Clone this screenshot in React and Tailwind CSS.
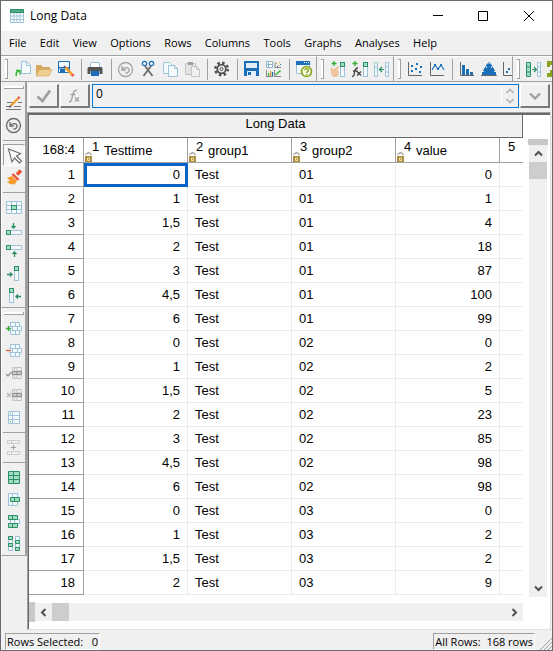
import React from 'react';

const BLUE = '#1a6fb8';
const GREEN = '#2a8f68';
const MINT = '#a3dcc0';
const SKY = '#9cc3d9';
const GRAY = '#a3a3a3';

function Glyph({ children }) {
  return (
    <svg viewBox="0 0 22 22" width="22" height="22" fill="none" aria-hidden="true" className="shrink-0">
      {children}
    </svg>
  );
}

/* One spreadsheet column with a shaded top cell. */
function ColumnShape({ x }) {
  return (
    <>
      <rect x={x} y="4.500" width="4" height="14" stroke={SKY} fill="#f4f9fc" />
      <rect x={x} y="4.500" width="4" height="4" stroke={GREEN} fill={MINT} />
    </>
  );
}

function Bricks({ color }) {
  return (
    <path
      d="M7.500 4.500h9v4h-9zM12.500 4.500v4M7.500 12.500h9v4h-9zM12.500 12.500v4M9.500 8.500h9v4h-9zM14.500 8.500v4M6 8.500h4M6 12.500h4"
      stroke={color}
      fill="#f4f9fc"
    />
  );
}

function GreyTable() {
  return (
    <>
      <path d="M9.500 5.500h9v11h-9zM14 5.500v11M9.500 9h9M9.500 13h9" stroke="#c4c4c4" fill="#eee" />
      <path d="M9.500 9.500h9v3h-9zM14 9.500v3" stroke="#8f8f8f" fill="#ccc" />
      <path d="M11 7h1M11 15h1" stroke="#999" />
    </>
  );
}

const icons = {
  newFile: (
    <>
      <path d="M10.500 3.500h5.500l3.500 3.500v8.500h-9z" fill="#f5fafd" stroke={SKY} />
      <path d="M15.500 3.500v4h4" stroke={SKY} />
      <path d="M5.500 18c-1-2.500 0-4.500 2.500-5" stroke="#33b733" strokeWidth="1.600" />
      <path d="M5 12.500h4v4" stroke="#33b733" strokeWidth="1.500" />
    </>
  ),
  open: (
    <>
      <path d="M3 7h5l2 2h7v3H7l-4 6z" fill="#d6aa60" />
      <path d="M6.500 11.500H19L16 18H3z" fill="#efcf91" stroke="#d6aa60" strokeWidth=".7" />
    </>
  ),
  saveAs: (
    <>
      <path d="M3.500 3.500h11v11h-11z" fill="#f3f8fc" stroke={BLUE} />
      <path d="M3 9h12v1.500H3zM5 11h5v4H5z" fill={BLUE} />
      <path d="M10.500 9.500l6.500 7" stroke="#efa02f" strokeWidth="2.800" />
      <path d="M9 8l1.500 1.500" stroke="#555" strokeWidth="1.500" />
      <path d="M17 16.500l1.500 1.500" stroke="#e75a55" strokeWidth="3" />
    </>
  ),
  print: (
    <>
      <path d="M5.500 9V5l1-.5H14l.5.5v4" fill="#fff" stroke={SKY} />
      <path d="M3.500 9h13l1 1v6h-3v-3h-9v3h-3v-6z" fill="#555" />
      <rect x="6" y="13" width="8" height="5" fill={BLUE} />
    </>
  ),
  undoGrey: (
    <>
      <circle cx="10.500" cy="11.500" r="7" stroke={GRAY} strokeWidth="1.300" />
      <path d="M7 8v4h4M7 12c2-3.500 7-3 7 0 0 2-1.500 3-3.500 3" stroke={GRAY} strokeWidth="1.300" />
    </>
  ),
  undo: (
    <>
      <circle cx="10.500" cy="11.500" r="7" stroke="#6b6b6b" strokeWidth="1.400" />
      <path d="M7 8v4h4M7 12c2-3.500 7-3 7 0 0 2-1.500 3-3.500 3" stroke="#6b6b6b" strokeWidth="1.300" />
    </>
  ),
  cut: (
    <>
      <path d="M8 8l7.500 10M14 8L6.500 18" stroke="#707070" strokeWidth="1.900" />
      <circle cx="7.500" cy="5.500" r="2.200" stroke={BLUE} strokeWidth="1.200" />
      <circle cx="14.500" cy="5.500" r="2.200" stroke={BLUE} strokeWidth="1.200" />
    </>
  ),
  copy: (
    <>
      <path d="M4.500 4.500h6l3 3v8h-9z" fill="#f5fafd" stroke={SKY} />
      <path d="M9.500 7.500h6l3 3v8h-9z" fill="#f5fafd" stroke={SKY} />
      <path d="M15.500 7.500v3h3" stroke={SKY} />
    </>
  ),
  paste: (
    <>
      <path d="M4.500 5.500h10v11h-10z" fill="#e2e2e2" stroke="#c4c4c4" />
      <path d="M7 4h5v3H7z" fill="#9d9d9d" />
      <path d="M10.500 8.500h5l3 3v7h-8z" fill="#f0f0f0" stroke="#c4c4c4" />
      <path d="M15.500 8.500v3h3" stroke="#c4c4c4" />
    </>
  ),
  gear: (
    <>
      <circle cx="10.500" cy="11" r="6.200" stroke="#505050" strokeWidth="2.600" strokeDasharray="2.430 2.430" />
      <circle cx="10.500" cy="11" r="4.300" stroke="#505050" strokeWidth="1.700" />
      <circle cx="10.500" cy="11" r="1.500" stroke="#505050" strokeWidth="1" />
    </>
  ),
  save: (
    <>
      <path d="M3 3h15v15H3z" fill={BLUE} />
      <path d="M5 5h11v5H5zM6 13h9v5H6z" fill="#e3eef8" />
      <path d="M7 14h3v3H7z" fill={BLUE} />
    </>
  ),
  reports: (
    <>
      <path d="M3.500 3.500h6v6h-6zM5.500 3.500v6M3.500 6.500h6" stroke="#8fb8cf" fill="#fff" />
      <path d="M12 4v6M12 9.500h6M11.500 12v6M11 18.500h7" stroke="#888" />
      <path d="M13 5h1v1h-1zM16 4h1v1h-1zM15 7h1v1h-1z" fill="#e49a1c" />
      <path d="M17 6h1v1h-1zM14 8h1v1h-1z" fill={BLUE} />
      <path d="M3.500 12v6M3 18.500h7" stroke="#888" />
      <path d="M5.500 18v-3" stroke="#33b733" strokeWidth="1.300" />
      <path d="M7.500 18v-5" stroke="#e49a1c" strokeWidth="1.300" />
      <path d="M9.500 18v-4" stroke={BLUE} strokeWidth="1.300" />
      <path d="M12.500 17l5-4.500" stroke="#33b733" strokeWidth="1.500" />
    </>
  ),
  help: (
    <>
      <path d="M3.500 3.500h13v12h-13z" fill="#f3f8fc" stroke={SKY} />
      <path d="M3 3h14v4H3z" fill={BLUE} />
      <path d="M11 4.500h1M13 4.500h1M15 4.500h1" stroke="#fff" />
      <circle cx="13.500" cy="13.500" r="5" fill="#f7fae6" stroke="#82a414" strokeWidth="1.600" />
      <path d="M11.800 12.300c0-2.300 3.600-2.300 3.600 0 0 1.300-1.800 1.300-1.800 2.700M13.600 16v1.200" stroke="#82a414" strokeWidth="1.400" />
    </>
  ),
  hand: (
    <>
      <path d="M4.500 5.500h5M7 3v5" stroke="#2fae2f" strokeWidth="1.300" />
      <path d="M3.500 10l1.500-.5 1.500 2L11 8l1.200 1-2.200 3 2 1.500-1 4-1.500 1.500H6L4 15.500z" fill="#edc3a0" />
      <ColumnShape x="13.500" />
    </>
  ),
  func: (
    <>
      <path d="M3.500 5.500h5M6 3v5" stroke="#2fae2f" strokeWidth="1.300" />
      <path d="M3 18.500c2 0 2-1 2.500-4s1-4.500 3.500-4.500M4 13h4.500" stroke="#444" strokeWidth="1.300" />
      <path d="M8 13.500l4 4M12 13.500l-4 4" stroke="#444" strokeWidth="1.400" />
      <ColumnShape x="14.500" />
    </>
  ),
  columnLeft: (
    <>
      <path d="M3.500 4.500h3v14h-3zM3.500 9h3M14.500 4.500h3v14h-3zM14.500 9h3M14.500 14h3" stroke={SKY} fill="#f4f9fc" />
      <path d="M13 11.500H8.500M11 9l-2.500 2.500L11 14" stroke={GREEN} strokeWidth="1.200" />
    </>
  ),
  scatter: (
    <>
      <path d="M4.500 4v13.500H18" stroke="#666" />
      <path d="M7 7h2v2H7zM12 5h2v2h-2zM16 8h2v2h-2zM7 12h2v2H7zM11 10h2v2h-2zM15 13h2v2h-2z" fill={BLUE} />
    </>
  ),
  line: (
    <>
      <path d="M4.500 4v13.500H18" stroke="#666" />
      <path d="M6 12l3-5 3 4 3-4 3 5" stroke={BLUE} strokeWidth="1.200" />
      <path d="M8 6h2v2H8zM11 10h2v2h-2zM14 6h2v2h-2z" fill={BLUE} />
    </>
  ),
  bars: (
    <>
      <path d="M4.500 4v13.500H18" stroke="#666" />
      <path d="M6 7h3v10H6zM10 11h3v6h-3zM14 14h3v3h-3z" fill={BLUE} />
    </>
  ),
  histogram: (
    <>
      <path d="M3 17.500h16" stroke="#666" />
      <path d="M4 14h3v3H4zM6 10h3v7H6zM9 6h4v11H9zM13 10h3v7h-3zM15 14h3v3h-3z" fill={BLUE} />
      <path d="M5 13c3-2 3-7 6-8.500 3 1.500 3 6.500 6 8.500" stroke={BLUE} />
    </>
  ),
  moreChart: (
    <>
      <path d="M3.500 4v13.500H18" stroke="#666" />
      <path d="M6 13h2v2H6zM8 10h2v2H8z" fill={BLUE} />
    </>
  ),
  columnRight: (
    <>
      <path d="M3.500 4.500h4v14h-4z" stroke={GREEN} fill={MINT} />
      <path d="M3.500 9h4M3.500 14h4" stroke={GREEN} />
      <path d="M14.500 4.500h3v14h-3zM14.500 9h3M14.500 14h3" stroke={SKY} fill="#f4f9fc" />
      <path d="M9 11.500h4.500M11 9l2.500 2.500L11 14" stroke={GREEN} strokeWidth="1.200" />
    </>
  ),
  stack: <path d="M2 3h6v4H5v2H2zM2 19v-4h3v-3h3v7z" fill="#86a51b" />,
  editText: (
    <>
      <path d="M4 10.500h6M15 10.500h4M3 14.500h4M11 14.500h7M3 17.500h15" stroke="#777" />
      <path d="M8 13.500l7-7" stroke="#efa02f" strokeWidth="2.400" />
      <path d="M15 6.500l1.600-1.600" stroke="#e75a55" strokeWidth="2.400" />
      <path d="M6.500 15.500L8 13.500" stroke="#555" strokeWidth="1.500" />
    </>
  ),
  pointer: <path d="M5.500 5l12 4.500-4 2.500 5 5-2 2-5-5-2.500 4z" fill="#fff" stroke="#666" strokeWidth="1.100" />,
  brush: (
    <>
      <path d="M18 4.500l-4 4" stroke="#e8502f" strokeWidth="3.400" />
      <path d="M8.500 10l5.500 5-2.500 3.500-4.500-.5-3-2.500 3-.5z" fill="#f39a2a" />
      <path d="M4 12l5-2 4.500 5-4 2z" fill="#f39a2a" />
      <path d="M9.500 8l6 6" stroke="#e8502f" strokeWidth="2.400" />
    </>
  ),
  cells: (
    <>
      <path d="M3.500 5.500h15v12h-15zM8.500 5.500v12M13.500 5.500v12M3.500 9.500h15M3.500 13.500h15" stroke={SKY} fill="#f8fbfd" />
      <path d="M8.500 9.500h5v4h-5z" stroke={GREEN} fill={MINT} />
    </>
  ),
  rowBelow: (
    <>
      <path d="M3.500 12.500h15v4h-15z" stroke={SKY} fill="#f4f9fc" />
      <path d="M3.500 12.500h4v4h-4z" stroke={GREEN} fill={MINT} />
      <path d="M10.500 5v5M8.500 8l2 2 2-2" stroke={GREEN} strokeWidth="1.300" />
    </>
  ),
  rowAbove: (
    <>
      <path d="M3.500 5.500h15v4h-15z" stroke={SKY} fill="#f4f9fc" />
      <path d="M3.500 5.500h4v4h-4z" stroke={GREEN} fill={MINT} />
      <path d="M11.500 17v-5M9.500 14l2-2 2 2" stroke={GREEN} strokeWidth="1.300" />
    </>
  ),
  colAfter: (
    <>
      <ColumnShape x="11.500" />
      <path d="M4 12.500h5M7 10.500l2 2-2 2" stroke={GREEN} strokeWidth="1.300" />
    </>
  ),
  colBefore: (
    <>
      <ColumnShape x="6.500" />
      <path d="M18 12.500h-5M15 10.500l-2 2 2 2" stroke={GREEN} strokeWidth="1.300" />
    </>
  ),
  addRows: (
    <>
      <Bricks color={SKY} />
      <path d="M3 10.500h5M5.500 8v5" stroke="#2fae2f" strokeWidth="1.300" />
    </>
  ),
  removeRows: (
    <>
      <Bricks color={SKY} />
      <path d="M3 10.500h5" stroke="#e25b45" strokeWidth="1.300" />
    </>
  ),
  includeRow: (
    <>
      <GreyTable />
      <path d="M3 12l2 2 3.500-4" stroke="#999" strokeWidth="1.500" />
    </>
  ),
  excludeRow: (
    <>
      <GreyTable />
      <path d="M4 9l4 4M8 9l-4 4" stroke="#bbb" strokeWidth="1.500" />
    </>
  ),
  list: (
    <>
      <path d="M5.500 5.500h11v12h-11zM9.500 5.500v12M5.500 9.500h11M5.500 13.500h11" stroke={SKY} fill="#f8fbfd" />
      <path d="M7 7h1v1H7zM7 15h1v1H7z" fill="#2fae2f" />
    </>
  ),
  addBetween: (
    <>
      <path d="M4.500 4.500h12v3h-12zM8.500 4.500v3M4.500 15.500h12v3h-12zM8.500 15.500v3" stroke="#cbcbcb" />
      <path d="M8 11.500h5M10.500 9v5" stroke="#a0a0a0" />
    </>
  ),
  greenTable: <path d="M5.500 5.500h11v12h-11zM10.500 5.500v12M5.500 9.500h11M5.500 13.500h11" stroke={GREEN} fill={MINT} />,
  greenRowMid: (
    <>
      <path d="M5.500 5.500h9v12h-9zM9.500 5.500v12" stroke={SKY} fill="#f4f9fc" />
      <path d="M7.500 9.500h9v4h-9zM11.500 9.500v4" stroke={GREEN} fill={MINT} />
    </>
  ),
  greenRowEnds: (
    <>
      <path d="M7.500 9.500h9v4h-9zM11.500 9.500v4" stroke={SKY} fill="#f4f9fc" />
      <path d="M5.500 5.500h9v4h-9zM9.500 5.500v4M5.500 13.500h9v4h-9zM9.500 13.500v4" stroke={GREEN} fill={MINT} />
    </>
  ),
  greenCols: (
    <>
      <path d="M5.500 4.500h4v14h-4zM12.500 4.500h4v14h-4z" stroke={SKY} fill="#f4f9fc" />
      <path d="M5.500 4.500h4v3h-4zM5.500 11.500h4v3h-4zM12.500 8.500h4v3h-4zM12.500 15.500h4v3h-4z" stroke={GREEN} fill={MINT} />
    </>
  ),
};

const SEP = 'sep';
const topGroups = [
  {
    className: 'pr-px',
    items: [
      ['newFile', 'New'], ['open', 'Open'], ['saveAs', 'Save as'], SEP,
      ['print', 'Print'], SEP,
      ['undoGrey', 'Undo'], ['cut', 'Cut'], ['copy', 'Copy'], ['paste', 'Paste'], SEP,
      ['gear', 'Settings'], SEP,
      ['save', 'Save'], ['reports', 'Reports'], SEP,
      ['help', 'Help window'],
    ],
  },
  { className: '', items: [['hand', 'Add column'], ['func', 'Add formula'], ['columnLeft', 'Move column left']] },
  {
    className: 'min-w-0 flex-1',
    items: [['scatter', 'Scatter chart'], ['line', 'Line chart'], SEP, ['bars', 'Bar chart'], ['histogram', 'Histogram'], ['moreChart', 'More charts']],
  },
  { className: 'w-[39px]', items: [['columnRight', 'Move column right'], ['stack', 'Stack columns']] },
];

const sideGroups = [
  [
    ['editText', 'Edit'], ['undo', 'Revert'], SEP,
    ['pointer', 'Pointer'], ['brush', 'Brush'], SEP,
    ['cells', 'Cells'], ['rowBelow', 'Insert row below'], ['rowAbove', 'Insert row above'], ['colAfter', 'Insert column after'], ['colBefore', 'Insert column before'],
  ],
  [
    ['addRows', 'Add rows'], ['removeRows', 'Remove rows'], ['includeRow', 'Include row'], ['excludeRow', 'Exclude row'], ['list', 'List'], SEP,
    ['addBetween', 'Add between'], SEP,
    ['greenTable', 'Select table'], ['greenRowMid', 'Select row'], ['greenRowEnds', 'Select other rows'], ['greenCols', 'Select columns'],
  ],
];

const menus = ['File', 'Edit', 'View', 'Options', 'Rows', 'Columns', 'Tools', 'Graphs', 'Analyses', 'Help'];
const columns = ['Testtime', 'group1', 'group2', 'value', ''];
const rows = [
  ['0', '01', '0'], ['1', '01', '1'], ['1,5', '01', '4'], ['2', '01', '18'], ['3', '01', '87'], ['4,5', '01', '100'], ['6', '01', '99'],
  ['0', '02', '0'], ['1', '02', '2'], ['1,5', '02', '5'], ['2', '02', '23'], ['3', '02', '85'], ['4,5', '02', '98'], ['6', '02', '98'],
  ['0', '03', '0'], ['1', '03', '2'], ['1,5', '03', '2'], ['2', '03', '9'],
];

function ToolButton({ name, label }) {
  const pressed = name === 'pointer';
  return (
    <button
      type="button"
      aria-label={label}
      className={
        pressed
          ? 'flex size-[22px] shrink-0 items-center justify-center overflow-hidden border border-t-[#a0a0a0] border-r-white border-b-white border-l-[#a0a0a0] bg-[#f6f6f6]'
          : 'flex size-[22px] shrink-0 items-center justify-center'
      }
    >
      <Glyph>{icons[name]}</Glyph>
    </button>
  );
}

function TitleBar() {
  return (
    <header className="flex h-[30px] items-center bg-white pl-[9px]">
      <svg viewBox="0 0 14 14" width="14" height="14" fill="none" aria-hidden="true">
        <path d="M.5.5h13v13H.5z" fill="#fff" stroke={SKY} />
        <path d="M.5.5h13v3H.5z" fill="#4fae86" stroke={GREEN} />
        <path d="M4 4v10M7 4v10M10 4v10M0 7h14M0 10.500h14" stroke={SKY} />
      </svg>
      <h1 className="ml-[6px] flex-1 text-[12px]">Long Data</h1>
      <button type="button" aria-label="Minimize" className="flex h-full w-[45px] items-center justify-center">
        <svg width="10" height="10" viewBox="0 0 10 10" stroke="#000" aria-hidden="true"><path d="M0 4.500h10" /></svg>
      </button>
      <button type="button" aria-label="Maximize" className="flex h-full w-[46px] items-center justify-center">
        <svg width="10" height="10" viewBox="0 0 10 10" fill="none" stroke="#000" aria-hidden="true"><path d="M.5.5h9v9h-9z" /></svg>
      </button>
      <button type="button" aria-label="Close" className="flex h-full w-[46px] items-center justify-center">
        <svg width="10" height="10" viewBox="0 0 10 10" stroke="#000" aria-hidden="true"><path d="M0 0l10 10M10 0L0 10" /></svg>
      </button>
    </header>
  );
}

function TopToolbar() {
  return (
    <div className="flex h-[27px] overflow-hidden border-t border-b border-[#a0a0a0]">
      {topGroups.map((group, g) => (
        <div key={g} className={'flex shrink-0 items-center overflow-hidden border-t border-r border-t-white border-r-[#a0a0a0] last:border-r-0 ' + group.className}>
          <div className="flex w-[10px] shrink-0 justify-center"><div className="h-5 w-[3px] border-y border-r border-[#a0a0a0] bg-white" /></div>
          {group.items.map((item, i) =>
            item === SEP ? (
              <div key={i} className="flex w-2 shrink-0 justify-center"><div className="h-[21px] w-px bg-[#a0a0a0]" /></div>
            ) : (
              <ToolButton key={i} name={item[0]} label={item[1]} />
            )
          )}
        </div>
      ))}
    </div>
  );
}

function SideToolbar() {
  return (
    <div className="flex w-[26px] shrink-0 flex-col">
      {sideGroups.map((group, g) => (
        <div key={g} className="flex flex-col items-center border-r-2 border-b border-l border-r-[#a0a0a0] border-b-[#a0a0a0] border-l-white pb-px">
          <div className="flex h-[10px] items-center"><div className="h-[3px] w-5 border-r border-b border-[#a0a0a0] bg-white" /></div>
          {group.map((item, i) =>
            item === SEP ? (
              <div key={i} className="flex h-2 items-center"><div className="h-px w-[22px] bg-[#a0a0a0]" /></div>
            ) : (
              <ToolButton key={i} name={item[0]} label={item[1]} />
            )
          )}
        </div>
      ))}
    </div>
  );
}

const raised = 'flex h-6 w-[30px] shrink-0 items-center justify-center border-t border-l border-r-2 border-b-2 border-t-white border-l-white border-r-[#7a7a7a] border-b-[#7a7a7a]';

function FormulaBar() {
  return (
    <div className="flex pt-[2px] pr-px pb-1 pl-[2px]">
      <button type="button" aria-label="Accept" className={raised}>
        <svg width="16" height="14" viewBox="0 0 16 14" fill="none" aria-hidden="true"><path d="M1.500 7.500l5 4.500L14 1.500" stroke="#a0a0a0" strokeWidth="2.800" /></svg>
      </button>
      <button type="button" aria-label="Function" className={raised + ' ml-px'}>
        <svg width="14" height="14" viewBox="0 0 14 14" fill="none" stroke="#a0a0a0" aria-hidden="true">
          <path d="M1 13c2 0 2.500-1 3.500-6S6.500 1 9 1.500M2.500 5.500h5" strokeWidth="1.300" />
          <path d="M7 8.500l4 4M11 8.500l-4 4" strokeWidth="1.400" />
        </svg>
      </button>
      <div className="ml-[2px] flex h-6 min-w-0 flex-1 border border-[#0078d7]">
        <input aria-label="Cell value" defaultValue="0" className="min-w-0 flex-1 pb-1 pl-[3px] text-[12px] outline-none" />
        <div className="flex w-[17px] flex-col items-center justify-between border-l border-white py-[3px]">
          <svg width="8" height="6" viewBox="0 0 8 6" fill="none" stroke="#b4b4b4" strokeWidth="1.600" aria-hidden="true"><path d="M.5 5L4 1.500 7.500 5" /></svg>
          <svg width="8" height="6" viewBox="0 0 8 6" fill="none" stroke="#b4b4b4" strokeWidth="1.600" aria-hidden="true"><path d="M.5 1L4 4.500 7.500 1" /></svg>
        </div>
      </div>
      <button type="button" aria-label="Expand" className={raised + ' ml-px'}>
        <svg width="12" height="8" viewBox="0 0 12 8" fill="none" aria-hidden="true"><path d="M1 1.500l5 5 5-5" stroke="#a0a0a0" strokeWidth="2.400" /></svg>
      </button>
    </div>
  );
}

function Lock() {
  return (
    <svg width="7" height="10" viewBox="0 0 7 10" fill="none" aria-hidden="true">
      <path d="M.7 3C1.200.2 5.800.2 6.300 3" stroke="#666" />
      <rect x="0" y="4" width="7" height="6" fill="#ad8d35" />
      <path d="M2.500 6v2.500h2V6z" stroke="#f2e3b0" />
    </svg>
  );
}

function DataTable() {
  const line = 'border-r border-b border-[#ececec]';
  return (
    <table className="w-[575px] table-fixed border-separate border-spacing-0">
      <colgroup>
        <col className="w-[55px]" />
        {columns.map((c, i) => <col key={i} className="w-[104px]" />)}
      </colgroup>
      <thead>
        <tr className="h-[25px]">
          <th className="border-r border-b border-[#a0a0a0] p-0 pr-2 text-right font-normal">168:4</th>
          {columns.map((name, i) => (
            <th key={i} className="border-r border-b border-[#a0a0a0] p-0 text-left font-normal">
              <div className="flex h-6 pl-px">
                <span className="flex w-[7px] shrink-0 items-end">{name && <Lock />}</span>
                <span className="w-[7px] leading-[18px]">{i + 1}</span>
                <span className="ml-[5px] leading-[26px]">{name}</span>
              </div>
            </th>
          ))}
        </tr>
      </thead>
      <tbody>
        {rows.map(([time, group, value], i) => (
          <tr key={i} className="h-6">
            <th className="border-r border-b border-[#a0a0a0] p-0 pr-2 text-right font-normal">{i + 1}</th>
            <td className={i === 0 ? 'border-[3px] border-[#0a64c8] p-0 pr-[5px] text-right leading-[18px]' : line + ' p-0 pr-[7px] text-right'}>{time}</td>
            <td className={line + ' p-0 pl-[7px]'}>Test</td>
            <td className={line + ' p-0 pl-[7px]'}>{group}</td>
            <td className={line + ' p-0 pr-[7px] text-right'}>{value}</td>
            <td className={line + ' p-0'} />
          </tr>
        ))}
      </tbody>
    </table>
  );
}

function Arrow({ d }) {
  return (
    <svg width="9" height="9" viewBox="0 0 9 9" fill="none" aria-hidden="true"><path d={d} stroke="#505050" strokeWidth="2" /></svg>
  );
}

function Sheet() {
  return (
    <section className="flex-1 border-t border-r border-b border-l border-t-[#a0a0a0] border-r-[#e0e0e0] border-b-[#e0e0e0] border-l-[#a0a0a0]">
      <div className="h-full border-t-2 border-l border-[#696969] bg-white pb-[7px] text-[13px] font-['Liberation_Sans',Arial,sans-serif]">
        <div className="flex">
          <div className="min-w-0 flex-1 overflow-hidden pb-[2px]">
            <h2 className="h-[23px] border-r border-b border-[#696969] bg-[#f0f0f0] text-center leading-[18px]">Long Data</h2>
            <DataTable />
          </div>
          <div className="ml-[5px] flex w-[22px] flex-col pt-6">
            <div className="h-[6px] w-5 bg-[#c8c8c8]" />
            <div className="ml-px flex w-[18px] flex-1 flex-col items-center bg-[#f0f0f0]">
              <button type="button" aria-label="Scroll up" className="flex h-[17px] w-full items-center justify-center"><Arrow d="M1 6.500L4.500 3 8 6.500" /></button>
              <div className="h-[17px] w-full bg-[#cdcdcd]" />
              <div className="flex-1" />
              <button type="button" aria-label="Scroll down" className="flex h-[17px] w-full items-center justify-center"><Arrow d="M1 2.500L4.500 6 8 2.500" /></button>
            </div>
          </div>
        </div>
        <div className="mt-[5px] mr-[27px] flex h-5 items-center">
          <div className="h-5 w-[6px] bg-[#c8c8c8]" />
          <div className="flex h-[18px] flex-1 bg-[#f0f0f0]">
            <button type="button" aria-label="Scroll left" className="flex w-[17px] items-center justify-center"><Arrow d="M6.500 1L3 4.500 6.500 8" /></button>
            <div className="w-[17px] bg-[#cdcdcd]" />
            <div className="flex-1" />
            <button type="button" aria-label="Scroll right" className="flex w-[17px] items-center justify-center"><Arrow d="M2.500 1L6 4.500 2.500 8" /></button>
          </div>
        </div>
      </div>
    </section>
  );
}

function StatusBar() {
  const box = 'h-[17px] border border-t-[#a0a0a0] border-r-white border-b-white border-l-[#a0a0a0] px-px leading-4 whitespace-pre';
  return (
    <footer className="flex justify-between pt-[3px] pl-1">
      <div className={box}>Rows Selected:   0</div>
      <div className="flex items-end">
        <div className={box}>All Rows:  168 rows</div>
        <svg width="17" height="14" viewBox="0 0 17 14" fill="none" stroke="#a0a0a0" aria-hidden="true">
          <path d="M5 14L17 2M9 14l8-8M13 14l4-4" />
        </svg>
      </div>
    </footer>
  );
}

export default function App() {
  return (
    <main className="flex min-h-screen flex-col overflow-hidden border border-[#6b6b6b] bg-[#f0f0f0] text-[11px] text-black font-['Open_Sans','Segoe_UI',sans-serif]">
      <TitleBar />
      <nav className="flex h-6 w-full max-w-[436px] items-center justify-between pl-2">
        {menus.map((m) => <button key={m} type="button">{m}</button>)}
      </nav>
      <TopToolbar />
      <div className="flex flex-1">
        <SideToolbar />
        <div className="flex min-w-0 flex-1 flex-col pr-px">
          <FormulaBar />
          <Sheet />
        </div>
      </div>
      <StatusBar />
    </main>
  );
}
